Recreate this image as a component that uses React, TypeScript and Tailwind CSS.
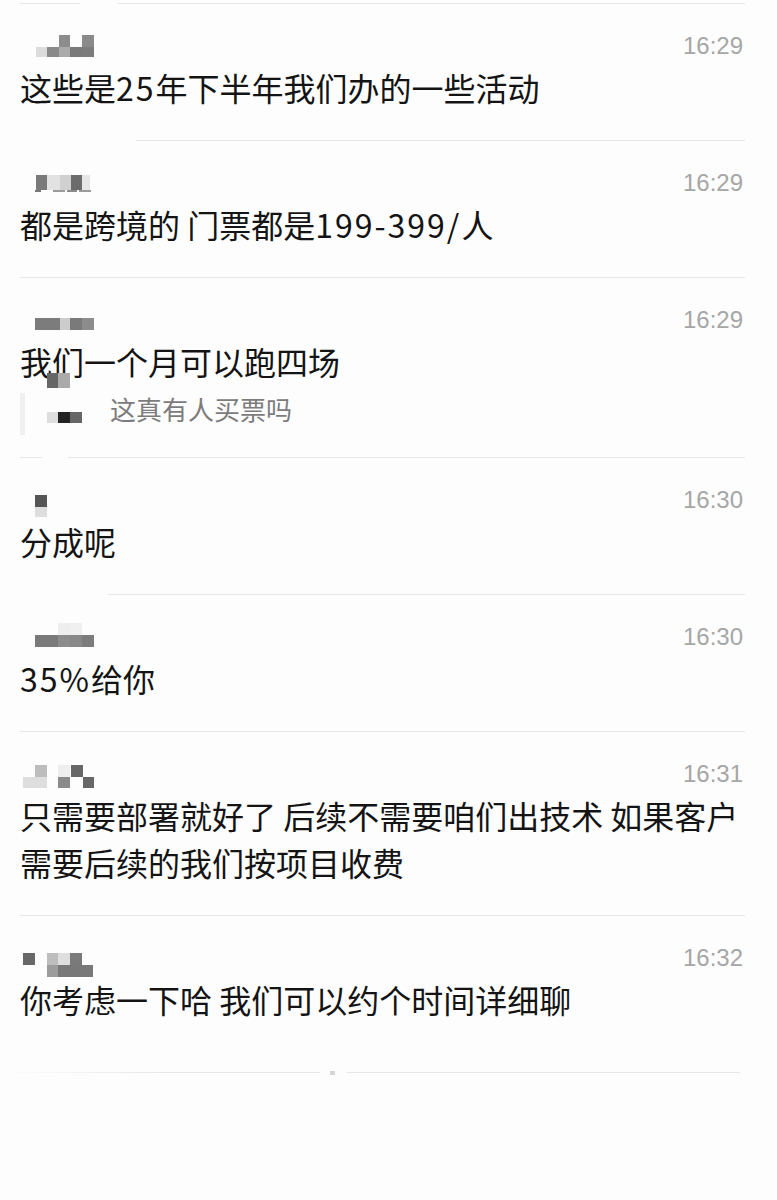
import React from "react";

type Cell = [number, number, number, number, string];

function Mosaic({ cells, w = 80, h = 30 }: { cells: Cell[]; w?: number; h?: number }) {
  return (
    <svg width={w} height={h} viewBox={`0 0 ${w} ${h}`} className="shrink-0 overflow-visible">
      {cells.map(([x, y, cw, ch, c], i) => (
        <rect key={i} x={x} y={y} width={cw} height={ch} fill={c} />
      ))}
    </svg>
  );
}

function Row({
  cells,
  time,
  children,
  extra,
  pb = "pb-[29px]",
}: {
  cells: Cell[];
  time: string;
  children: React.ReactNode;
  extra?: React.ReactNode;
  pb?: string;
}) {
  return (
    <div className={`pl-[20px] pr-[34px] pt-[27px] ${pb}`}>
      <div className="flex h-[30px] items-center justify-between">
        <Mosaic cells={cells} />
        <span className="font-['Liberation_Sans',Arial,sans-serif] text-[24px] leading-[30px] text-[#a6a6a6]">
          {time}
        </span>
      </div>
      <p className="mt-[3px] text-[32px] leading-[47px] text-[#141414]">{children}</p>
      {extra}
    </div>
  );
}

function Num({ children }: { children: React.ReactNode }) {
  return <span className="tracking-[2px]">{children}</span>;
}

const m1: Cell[] = [
  [39, 4, 11, 12, "#8c8c8c"],
  [62, 4, 12, 12, "#8a8a8a"],
  [16, 16, 11, 10, "#dcdcdc"],
  [27, 16, 12, 10, "#8a8a8a"],
  [39, 16, 11, 10, "#ababab"],
  [50, 16, 12, 10, "#7a7a7a"],
  [62, 16, 12, 10, "#7c7c7c"],
];
const m2: Cell[] = [
  [16, 7, 11, 15, "#7a7a7a"],
  [27, 7, 13, 15, "#e2e2e2"],
  [40, 7, 11, 15, "#d0d0d0"],
  [51, 7, 11, 15, "#6c6c6c"],
  [62, 7, 8, 15, "#e6e6e6"],
  [15, 22, 6, 2, "#777777"],
  [33, 22, 12, 2, "#9a9a9a"],
  [47, 22, 10, 2, "#8a8a8a"],
  [59, 22, 12, 2, "#9a9a9a"],
];
const m3: Cell[] = [
  [15, 13, 25, 12, "#7c7c7c"],
  [40, 13, 10, 12, "#cccccc"],
  [50, 13, 12, 12, "#7a7a7a"],
  [62, 13, 12, 12, "#8c8c8c"],
];
const m4: Cell[] = [
  [15, 10, 12, 12, "#555555"],
  [15, 22, 12, 10, "#dedede"],
];
const m5: Cell[] = [
  [38, 1, 12, 12, "#eeeeee"],
  [50, 1, 12, 12, "#f0f0f0"],
  [15, 13, 23, 12, "#7a7a7a"],
  [38, 13, 12, 12, "#8c8c8c"],
  [50, 13, 12, 12, "#888888"],
  [62, 13, 12, 12, "#7c7c7c"],
];
const m6: Cell[] = [
  [15, 6, 12, 12, "#bdbdbd"],
  [38, 6, 12, 12, "#eeeeee"],
  [51, 6, 12, 12, "#676767"],
  [3, 18, 24, 11, "#dedede"],
  [38, 18, 12, 11, "#8a8a8a"],
  [63, 18, 11, 11, "#676767"],
];
const m7: Cell[] = [
  [3, 10, 12, 12, "#686868"],
  [27, 10, 11, 12, "#bdbdbd"],
  [38, 10, 12, 12, "#dedede"],
  [50, 10, 12, 12, "#7a7a7a"],
  [27, 22, 11, 12, "#9c9c9c"],
  [38, 22, 35, 12, "#787878"],
];
const mq: Cell[] = [
  [0, 3, 5, 42, "#f0f0f0"],
  [27, -17, 11, 15, "#666666"],
  [38, -17, 12, 15, "#aaaaaa"],
  [27, 22, 11, 11, "#dddddd"],
  [38, 22, 12, 11, "#242424"],
  [50, 22, 12, 11, "#666666"],
];

export default function App() {
  return (
    <div className="min-h-[1200px] w-[777px] bg-[#fdfdfd] pt-[3px] font-['Noto_Sans_CJK_SC','Noto_Sans',sans-serif]">
      <div className="flex h-px">
        <div className="ml-[20px] w-[60px] bg-[#e6e6e6]" />
        <div className="ml-[38px] w-[627px] bg-[#e6e6e6]" />
      </div>
      <Row cells={m1} time="16:29">
        这些是<Num>25</Num>年下半年我们办的一些活动
      </Row>
      <div className="flex h-px">
        <div className="ml-[136px] w-[609px] bg-[#e4e4e4]" />
      </div>
      <Row cells={m2} time="16:29">
        都是跨境的 门票都是<Num>199-399/</Num>人
      </Row>
      <div className="flex h-px">
        <div className="ml-[20px] w-[725px] bg-[#e6e6e6]" />
      </div>
      <Row
        cells={m3}
        time="16:29"
        extra={
          <div className="mt-[5px] flex h-[38px] items-center">
            <Mosaic cells={mq} w={90} h={38} />
            <span className="text-[26px] leading-[38px] text-[#7c7c7c]">这真有人买票吗</span>
          </div>
        }
      >
        我们一个月可以跑四场
      </Row>
      <div className="flex h-px">
        <div className="ml-[20px] w-[22px] bg-[#e6e6e6]" />
        <div className="ml-[26px] w-[677px] bg-[#e6e6e6]" />
      </div>
      <Row cells={m4} time="16:30">
        分成呢
      </Row>
      <div className="flex h-px">
        <div className="ml-[108px] w-[637px] bg-[#e6e6e6]" />
      </div>
      <Row cells={m5} time="16:30">
        <Num>35%</Num>给你
      </Row>
      <div className="flex h-px">
        <div className="ml-[20px] w-[725px] bg-[#e6e6e6]" />
      </div>
      <Row cells={m6} time="16:31">
        只需要部署就好了 后续不需要咱们出技术 如果客户需要后续的我们按项目收费
      </Row>
      <div className="flex h-px">
        <div className="ml-[20px] w-[725px] bg-[#e6e6e6]" />
      </div>
      <Row cells={m7} time="16:32" pb="pb-[49px]">
        你考虑一下哈 我们可以约个时间详细聊
      </Row>
      <div className="flex h-px items-center">
        <div className="h-px w-[320px] bg-gradient-to-r from-[#fdfdfd] via-[#e8e8e8] to-[#e8e8e8]" />
        <div className="ml-[10px] h-[4px] w-[5px] bg-[#d6d6d6]" />
        <div className="ml-[12px] h-px w-[393px] bg-[#e8e8e8]" />
      </div>
    </div>
  );
}
